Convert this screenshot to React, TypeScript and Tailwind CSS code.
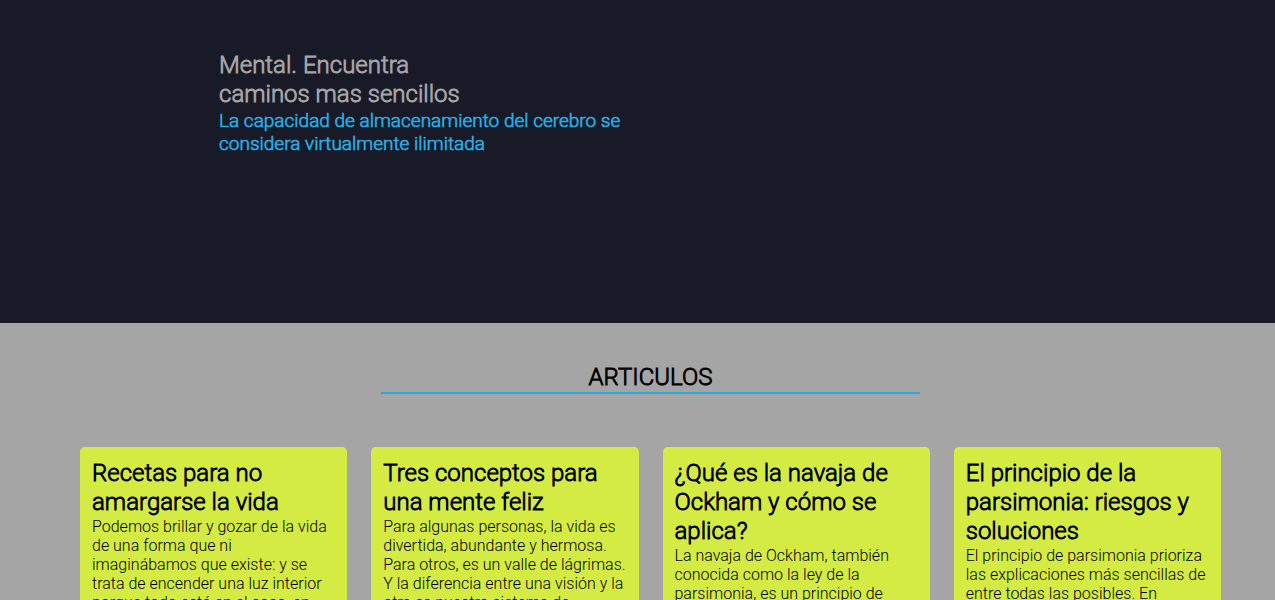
const articles = [
  {
    title: 'Recetas para no amargarse la vida',
    text: 'Podemos brillar y gozar de la vida de una forma que ni imaginábamos que existe: y se trata de encender una luz interior porque todo está en el coco, en',
  },
  {
    title: 'Tres conceptos para una mente feliz',
    text: 'Para algunas personas, la vida es divertida, abundante y hermosa. Para otros, es un valle de lágrimas. Y la diferencia entre una visión y la otra es nuestro sistema de',
  },
  {
    title: '¿Qué es la navaja de Ockham y cómo se aplica?',
    text: 'La navaja de Ockham, también conocida como la ley de la parsimonia, es un principio de',
  },
  {
    title: 'El principio de la parsimonia: riesgos y soluciones',
    text: 'El principio de parsimonia prioriza las explicaciones más sencillas de entre todas las posibles. En',
  },
];

function Hero() {
  return (
    <header className="min-h-[323px] bg-[#191a27] px-4 pt-[51px] font-bold md:pl-[219px]">
      <h1 className="text-2xl leading-[29px] text-[#a5a5a5]">
        Mental. Encuentra
        <br />
        caminos mas sencillos
      </h1>
      <p className="max-w-[410px] text-[19px] leading-[23px] text-[#29abe2]">
        La capacidad de almacenamiento del cerebro se considera virtualmente ilimitada
      </p>
    </header>
  );
}

function Article({ title, text }: { title: string; text: string }) {
  return (
    <article className="min-h-[400px] rounded-[5px] bg-[#d4eb44] p-3">
      <h3 className="text-2xl leading-[29px] font-bold">{title}</h3>
      <p className="text-base leading-[19px]">{text}</p>
    </article>
  );
}

export default function App() {
  return (
    <div className="h-screen overflow-hidden bg-[#a5a5a5] font-['Roboto_Light',Roboto,sans-serif] text-black">
      <Hero />
      <main className="pt-10 pr-[54px] pl-20">
        <h2 className="mx-auto mb-[53px] w-[47.3%] border-b-2 border-[#29abe2] text-center text-2xl leading-[29px] font-bold">
          ARTICULOS
        </h2>
        <section className="grid grid-cols-1 gap-6 sm:grid-cols-2 lg:grid-cols-4">
          {articles.map((a) => (
            <Article key={a.title} title={a.title} text={a.text} />
          ))}
        </section>
      </main>
    </div>
  );
}
